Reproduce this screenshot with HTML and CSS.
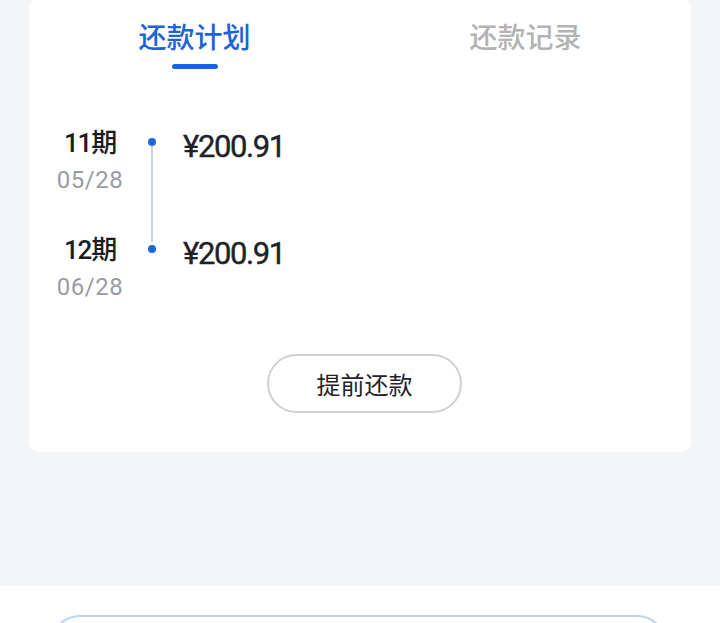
FILE: index.html
```html
<!DOCTYPE html>
<html lang="zh-CN">
<head>
    <meta charset="UTF-8">
    <meta name="viewport" content="width=device-width, initial-scale=1.0">
    <title>还款计划</title>
    <link rel="stylesheet" href="styles.css">
</head>
<body>
    <div class="page">
        <div class="card">
            <div class="tabs">
                <div class="tab active">
                    <span class="tab-text">还款计划</span>
                    <span class="tab-bar"></span>
                </div>
                <div class="tab">
                    <span class="tab-text">还款记录</span>
                </div>
            </div>

            <div class="plan">
                <div class="row">
                    <div class="when">
                        <div class="term">11期</div>
                        <div class="date">05/28</div>
                    </div>
                    <div class="node first">
                        <span class="dot"></span>
                        <span class="line"></span>
                    </div>
                    <div class="amount">¥200.91</div>
                </div>
                <div class="row">
                    <div class="when">
                        <div class="term">12期</div>
                        <div class="date">06/28</div>
                    </div>
                    <div class="node last">
                        <span class="line"></span>
                        <span class="dot"></span>
                    </div>
                    <div class="amount">¥200.91</div>
                </div>
            </div>

            <div class="actions">
                <button type="button" class="btn-prepay">提前还款</button>
            </div>
        </div>
    </div>

    <div class="footer">
        <div class="footer-pill"></div>
    </div>
</body>
</html>
```

FILE: styles.css
```css
html, body {
    margin: 0;
    height: 100%;
}

body {
    background-color: #ffffff;
    font-family: Roboto, "Noto Sans CJK SC", sans-serif;
    color: #1f2329;
    display: flex;
    flex-direction: column;
    overflow: hidden;
}

.page {
    height: 586px;
    flex-shrink: 0;
    background-color: #f4f5f7;
    padding: 0 29px;
    box-sizing: border-box;
}

.card {
    background-color: #ffffff;
    border-radius: 10px;
    margin-top: -2px;
    padding-top: 18px;
    padding-bottom: 39px;
}

.tabs {
    display: flex;
}

.tab {
    flex: 1;
    display: flex;
    flex-direction: column;
    align-items: center;
}

.tab-text {
    font-size: 28px;
    line-height: 40px;
    font-weight: 500;
    color: #b3b3b3;
    font-family: "Noto Sans CJK SC", sans-serif;
}

.tab.active .tab-text {
    color: #1b64d8;
}

.tab-bar {
    width: 46px;
    height: 5px;
    border-radius: 3px;
    background-color: #1b64d8;
    margin-top: 8px;
}

.plan {
    margin-top: 57px;
    padding-left: 21px;
}

.row {
    display: flex;
}

.when {
    width: 80px;
    text-align: center;
}

.row:first-child .when {
    margin-bottom: 33px;
}

.term {
    font-size: 26px;
    line-height: 34px;
    font-weight: 500;
    color: #1a1c20;
    letter-spacing: -1.2px;
}

.date {
    font-size: 24px;
    line-height: 40px;
    color: #9a9ca3;
    letter-spacing: 0.5px;
}

.node {
    width: 20px;
    margin-left: 12px;
    display: flex;
    flex-direction: column;
    align-items: center;
}

.node.first {
    padding-top: 12px;
}

.node.last {
    height: 20px;
}

.dot {
    width: 8px;
    height: 8px;
    border-radius: 50%;
    background-color: #1f66dc;
    box-shadow: 0 0 0 3px #ffffff;
    flex-shrink: 0;
}

.line {
    width: 2px;
    flex: 1;
    background-color: #c8d6e5;
}

.amount {
    margin-left: 21px;
    font-size: 31px;
    line-height: 42px;
    font-weight: 400;
    letter-spacing: -1.4px;
    color: #1f2329;
    -webkit-text-stroke: 0.4px #1f2329;
}

.actions {
    display: flex;
    justify-content: center;
    margin-top: 47px;
}

.btn-prepay {
    width: 195px;
    height: 59px;
    margin-left: 9px;
    border: 2px solid #cfd0d4;
    border-radius: 30px;
    background-color: #ffffff;
    font-family: "Noto Sans CJK SC", sans-serif;
    font-size: 24px;
    color: #1f2329;
}

.footer {
    height: 37px;
    flex-shrink: 0;
    overflow: hidden;
    background-color: #ffffff;
    padding: 29px 53px 0 50px;
    box-sizing: border-box;
}

.footer-pill {
    height: 60px;
    border: 2px solid #bdd5ee;
    border-radius: 30px;
}
```
